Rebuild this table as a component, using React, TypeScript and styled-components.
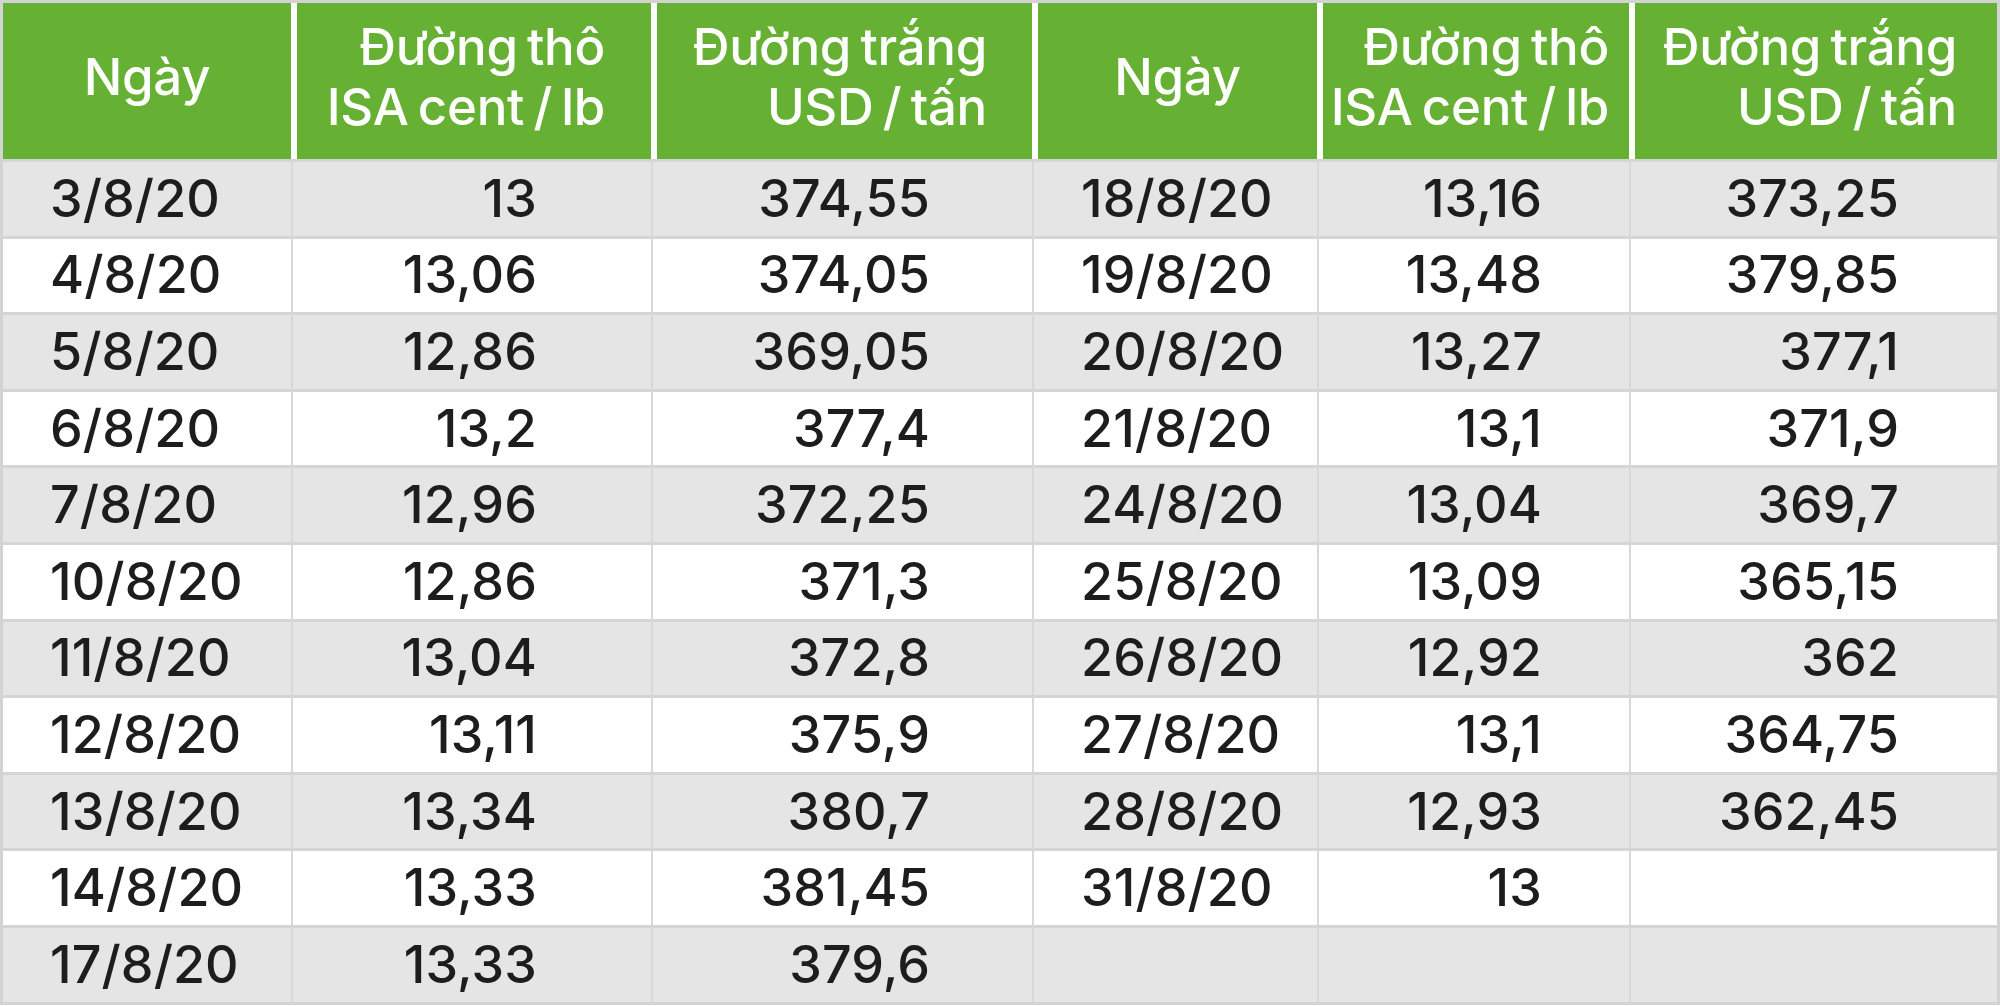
import React from 'react';
import styled, { createGlobalStyle } from 'styled-components';

const GlobalStyle = createGlobalStyle`
  html, body {
    margin: 0;
    padding: 0;
    background: #ffffff;
  }
  body {
    font-family: Inter, 'Noto Sans', 'Liberation Sans', sans-serif;
    color: #1d1d1d;
  }
`;

type Align = 'left' | 'center' | 'right';

interface Column {
  width: number;
  headAlign: Align;
  headPad: number;
  bodyAlign: Align;
  bodyPad: number;
}

// widths are border-box, measured off the reference (sum = table inner width)
const COLUMNS: Column[] = [
  { width: 288, headAlign: 'center', headPad: 0, bodyAlign: 'left', bodyPad: 47 },
  { width: 360, headAlign: 'right', headPad: 46, bodyAlign: 'right', bodyPad: 114 },
  { width: 381, headAlign: 'right', headPad: 45, bodyAlign: 'right', bodyPad: 102 },
  { width: 285, headAlign: 'center', headPad: 0, bodyAlign: 'left', bodyPad: 47 },
  { width: 312, headAlign: 'right', headPad: 20, bodyAlign: 'right', bodyPad: 87 },
  { width: 368, headAlign: 'right', headPad: 40, bodyAlign: 'right', bodyPad: 98 },
];

const HEADERS = [
  ['Ngày'],
  ['Đường thô', 'ISA cent / lb'],
  ['Đường trắng', 'USD / tấn'],
  ['Ngày'],
  ['Đường thô', 'ISA cent / lb'],
  ['Đường trắng', 'USD / tấn'],
];

const ROWS: string[][] = [
  ['3/8/20', '13', '374,55', '18/8/20', '13,16', '373,25'],
  ['4/8/20', '13,06', '374,05', '19/8/20', '13,48', '379,85'],
  ['5/8/20', '12,86', '369,05', '20/8/20', '13,27', '377,1'],
  ['6/8/20', '13,2', '377,4', '21/8/20', '13,1', '371,9'],
  ['7/8/20', '12,96', '372,25', '24/8/20', '13,04', '369,7'],
  ['10/8/20', '12,86', '371,3', '25/8/20', '13,09', '365,15'],
  ['11/8/20', '13,04', '372,8', '26/8/20', '12,92', '362'],
  ['12/8/20', '13,11', '375,9', '27/8/20', '13,1', '364,75'],
  ['13/8/20', '13,34', '380,7', '28/8/20', '12,93', '362,45'],
  ['14/8/20', '13,33', '381,45', '31/8/20', '13', ''],
  ['17/8/20', '13,33', '379,6', '', '', ''],
];

const Table = styled.table`
  width: 2000px;
  table-layout: fixed;
  border-collapse: separate;
  border-spacing: 0;
  border: 3px solid #d3d3d3;
  box-sizing: border-box;
  font-size: 52px;
  font-weight: 500;
  letter-spacing: 0.1px;
`;

const HeadCell = styled.th<{ $align: Align; $pad: number; $first: boolean }>`
  height: 156px;
  box-sizing: border-box;
  padding: 0 ${(p) => (p.$align === 'right' ? p.$pad : 0)}px 8px 0;
  background: #66b034;
  color: #ffffff;
  font-size: 51px;
  font-weight: 500;
  letter-spacing: -0.3px;
  line-height: 60px;
  word-spacing: -4px;
  white-space: nowrap;
  text-align: ${(p) => p.$align};
  vertical-align: middle;
  border-left: ${(p) => (p.$first ? 'none' : '6px solid #ffffff')};
`;

const Row = styled.tr<{ $shade: boolean }>`
  height: 76.6px;
  background: ${(p) => (p.$shade ? '#e5e5e5' : '#ffffff')};
`;

const Cell = styled.td<{ $align: Align; $pad: number; $first: boolean }>`
  box-sizing: border-box;
  padding: 0 ${(p) => (p.$align === 'right' ? p.$pad : 0)}px 0
    ${(p) => (p.$align === 'left' ? p.$pad : 0)}px;
  border-top: 3px solid #d5d5d5;
  border-left: ${(p) => (p.$first ? 'none' : '2px solid #d8d8d8')};
  text-align: ${(p) => p.$align};
  vertical-align: middle;
  line-height: 1;
  white-space: nowrap;
`;

export default function App() {
  return (
    <>
      <GlobalStyle />
      <Table>
        <colgroup>
          {COLUMNS.map((c, i) => (
            <col key={i} style={{ width: c.width }} />
          ))}
        </colgroup>
        <thead>
          <tr>
            {HEADERS.map((lines, i) => (
              <HeadCell
                key={i}
                $align={COLUMNS[i].headAlign}
                $pad={COLUMNS[i].headPad}
                $first={i === 0}
              >
                {lines.map((l, j) => (
                  <div key={j}>{l}</div>
                ))}
              </HeadCell>
            ))}
          </tr>
        </thead>
        <tbody>
          {ROWS.map((row, r) => (
            <Row key={r} $shade={r % 2 === 0}>
              {row.map((v, i) => (
                <Cell
                  key={i}
                  $align={COLUMNS[i].bodyAlign}
                  $pad={COLUMNS[i].bodyPad}
                  $first={i === 0}
                >
                  {v}
                </Cell>
              ))}
            </Row>
          ))}
        </tbody>
      </Table>
    </>
  );
}
